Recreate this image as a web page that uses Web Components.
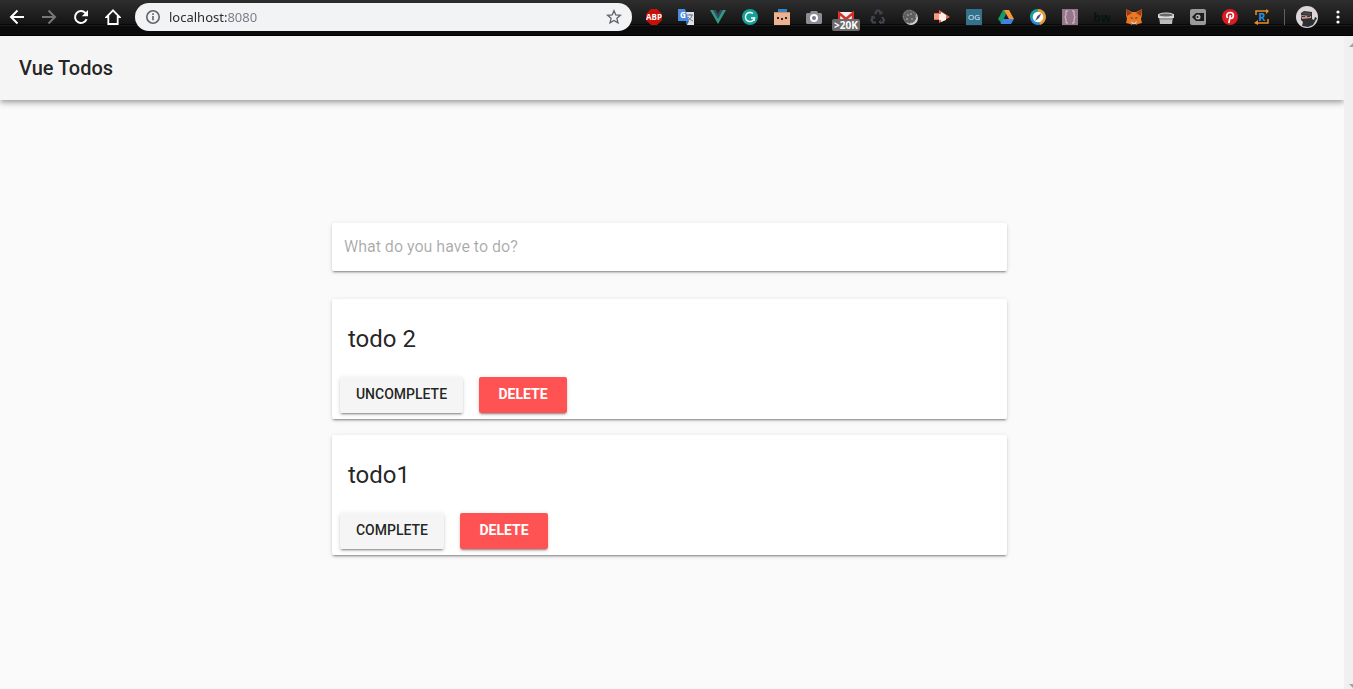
<!DOCTYPE html>
<html lang="en">
<head>
<meta charset="utf-8">
<meta name="viewport" content="width=device-width, initial-scale=1">
<title>Vue Todos</title>
<style>
  html, body { height: 100%; margin: 0; }
  body { background: #fafafa; color: rgba(0,0,0,.87); font-family: Roboto, "Liberation Sans", sans-serif; overflow: hidden; }
</style>
</head>
<body>
<todo-window></todo-window>

<script>
const define = (name, html, setup) => customElements.define(name, class extends HTMLElement {
  connectedCallback() {
    if (this.shadowRoot) return;
    const template = document.createElement('template');
    template.innerHTML = html;
    this.attachShadow({ mode: 'open' }).append(template.content.cloneNode(true));
    if (setup) setup(this, this.shadowRoot);
  }
});

/* A toolbar button that holds one drawn icon */
define('icon-button', `
  <style>
    :host { display: block; position: relative; flex: none; width: 32px; height: 34px; }
    button { display: flex; align-items: center; justify-content: center; width: 100%; height: 100%; padding: 0; border: 0; background: none; color: inherit; }
    ::slotted(svg) { display: block; }
  </style>
  <button type="button"><slot></slot></button>
  <slot name="badge"></slot>`,
  (host, root) => root.querySelector('button').setAttribute('aria-label', host.getAttribute('label')));

define('address-bar', `
  <style>
    :host { display: flex; align-items: center; flex: 1; min-width: 120px; height: 28px; margin: 0 6px; padding: 0 10px; box-sizing: border-box; border-radius: 14px; background: #f1f3f4; color: #5f6368; }
    svg { flex: none; }
    input { flex: 1; min-width: 0; height: 24px; margin: 0; padding: 0 8px; border: 0; outline: 0; font: 13px/24px "Noto Sans", sans-serif;
      background: linear-gradient(90deg, #26282b 66px, #777b80 66px); -webkit-background-clip: text; background-clip: text; color: transparent; }
  </style>
  <svg width="16" height="16" viewBox="0 0 16 16" fill="none" stroke="currentColor" stroke-width="1.6"><circle cx="8" cy="8" r="6.2"/><path d="M8 7v4.3M8 4.3v1.6"/></svg>
  <input type="text" aria-label="Address" value="localhost:8080" spellcheck="false">
  <svg width="16" height="16" viewBox="0 0 16 16" fill="none" stroke="currentColor" stroke-width="1.3"><path d="M8 1.7l1.8 4.2 4.6.4-3.5 3 1.1 4.5L8 11.4l-4 2.4 1.100-4.500-3.500-3 4.600-.4z"/></svg>`);

define('browser-bar', `
  <style>
    :host { display: flex; align-items: flex-start; height: 36px; padding: 0 0 0 1px; box-sizing: border-box; color: #fff;
      background: linear-gradient(#2e2e2e, #151515 24px, #080808 24px, #080808 25px, #1a1a1a 25px, #1a1a1a 26px, #0b0b0b 26px, #0b0b0b 35px, #000 35px); }
    nav, .extensions { display: flex; flex: none; }
    address-bar { margin-top: 3px; }
    .off { color: #777; }
    .rule { width: 1px; height: 16px; margin: 9px 6px 0; background: #606060; }
    .profile { width: 32px; }
    .menu { width: 30px; }
    .badge { position: absolute; left: 2px; top: 19px; width: 28px; height: 12px; border-radius: 2px; background: #6b6b6b; color: #fff; font: bold 10px/12px "Open Sans", sans-serif; text-align: center; }
    text { font-family: "Open Sans", sans-serif; font-weight: 700; text-anchor: middle; }
  </style>
  <nav aria-label="Browser navigation">
    <icon-button label="Back"><svg width="16" height="16" viewBox="0 0 16 16" fill="none" stroke="currentColor" stroke-width="2"><path d="M15 8H2.500M8.500 1.500L2 8l6.500 6.500"/></svg></icon-button>
    <icon-button label="Forward" class="off"><svg width="16" height="16" viewBox="0 0 16 16" fill="none" stroke="currentColor" stroke-width="2"><path d="M1 8h12.500M7.500 1.500L14 8l-6.500 6.500"/></svg></icon-button>
    <icon-button label="Reload"><svg width="16" height="16" viewBox="0 0 16 16" fill="none" stroke="currentColor" stroke-width="2"><path d="M13.600 10.200A6 6 0 1 1 12.400 3.900L14 5.500"/><path d="M15 1v6.200H8.800z" fill="currentColor" stroke="none"/></svg></icon-button>
    <icon-button label="Home"><svg width="16" height="16" viewBox="0 0 16 16" fill="none" stroke="currentColor" stroke-width="1.800"><path d="M8 1.300L1.500 8H3.300v7h9.400V8h1.800z"/></svg></icon-button>
  </nav>
  <address-bar></address-bar>
  <div class="extensions">
    <icon-button label="Adblock Plus"><svg width="16" height="16" viewBox="0 0 16 16"><path d="M5 0h6l5 5v6l-5 5H5l-5-5V5z" fill="#c81208"/><text x="8" y="11" font-size="8" fill="#fff">ABP</text></svg></icon-button>
    <icon-button label="Translate"><svg width="16" height="16" viewBox="0 0 16 16"><path d="M6 3h10v13H9z" fill="#dfe1e4"/><path d="M9 6h6M12 5v1M14 6c-.5 3-2 4-4 5M10 8c1 2 3 3 5 4" stroke="#66788a" fill="none"/><path d="M0 0h7l4 12H0z" fill="#4a8be0"/><path d="M8 12h3l-2 4z" fill="#2864bd"/><text x="5" y="9" font-size="8" fill="#fff">G</text></svg></icon-button>
    <icon-button label="Vue devtools"><svg width="16" height="16" viewBox="0 0 16 16"><path d="M0 1h4l4 7 4-7h4L8 15z" fill="#2d9c83"/><path d="M3 1h3l2 4 2-4h3L8 10z" fill="#34495e"/></svg></icon-button>
    <icon-button label="Grammarly"><svg width="16" height="16" viewBox="0 0 16 16"><circle cx="8" cy="8" r="8" fill="#15a196"/><path d="M11 4.500A4.600 4.600 0 1 0 12.500 9H9" stroke="#fff" stroke-width="1.500" fill="none"/><path d="M12.500 8.500v3.300" stroke="#fff"/></svg></icon-button>
    <icon-button label="Character"><svg width="16" height="16" viewBox="0 0 16 16"><path d="M0 4h16v12H0z" fill="#edb391"/><path d="M4 0h9v3H4z" fill="#3386c6"/><path d="M0 3h16v1H0z" fill="#cb8f71"/><path d="M3 8h2v2H3zM11 8h2v2h-2zM7 9h2v2H7z" fill="#27272d"/></svg></icon-button>
    <icon-button label="Screenshot"><svg width="16" height="16" viewBox="0 0 16 16"><path d="M5 2h6l1 2h3l1 1v9l-1 1H1l-1-1V5l1-1h3z" fill="#8b8c94"/><circle cx="8" cy="9" r="3" fill="#777984" stroke="#fff" stroke-width="2"/></svg></icon-button>
    <icon-button label="Mail checker"><svg width="16" height="16" viewBox="0 0 16 16"><path d="M0 3h16v10H0z" fill="#f1f1f1"/><path d="M1 13V4l7 6 7-6v9" fill="none" stroke="#dc2e28" stroke-width="2.500"/></svg><span slot="badge" class="badge">&gt;20K</span></icon-button>
    <icon-button label="Recycle"><svg width="16" height="16" viewBox="0 0 16 16" fill="none" stroke="#414750" stroke-width="2.200"><path d="M5 5l2-3.500h2l2 3M12 8l2 3-1 2.500h-3M6 13.500H3L1.500 11 3 8"/><path d="M9 5h3V2M11 11l-2 2 2 2M1 8l3-1 1 3" stroke-width="1"/></svg></icon-button>
    <icon-button label="Cookies"><svg width="16" height="16" viewBox="0 0 16 16"><circle cx="9" cy="9" r="7" fill="#d3d3d3"/><circle cx="7.500" cy="7.500" r="7" fill="#5e5e5e"/><circle cx="7.500" cy="7.500" r="6" fill="none" stroke="#8f8f8f" stroke-dasharray="1.500 2"/><path d="M5 5h2v2H5zM8 4h2v2H8zM4 9h2v2H4zM9 9h2v2H9z" fill="#8a8a8a"/></svg></icon-button>
    <icon-button label="Run"><svg width="16" height="16" viewBox="0 0 16 16"><path d="M0 4h5V1l11 7-11 6v-3H0z" fill="#ed6653"/><path d="M5 5h2V3l5 3v5l-5 2v-2H5z" fill="#fff0e9"/><path d="M0 5h5v5H0z" fill="#f49b86"/></svg></icon-button>
    <icon-button label="Open Graph"><svg width="16" height="16" viewBox="0 0 16 16"><path d="M0 0h16v16H0z" fill="#33718d"/><text x="8" y="11" font-size="8" style="font-weight:400" fill="#e3edf1">OG</text></svg></icon-button>
    <icon-button label="Drive"><svg width="16" height="16" viewBox="0 0 16 16"><path d="M5 1h5L3.500 14.500 0 10z" fill="#159a65"/><path d="M6 1h5l5 9h-5z" fill="#fa9734"/><path d="M5 10h11l-3 5H2.500z" fill="#3f82e6"/></svg></icon-button>
    <icon-button label="Compass"><svg width="16" height="16" viewBox="0 0 16 16"><circle cx="8" cy="8" r="8" fill="#258dd8"/><path d="M8 0A8 8 0 0 0 0 9l8-1z" fill="#15a191"/><path d="M8 0a8 8 0 0 1 2 15.700L8 8z" fill="#f49425"/><circle cx="8" cy="8" r="5.300" fill="#fff"/><path d="M11.500 4L9 9l-4 3 2.500-5z" fill="#44515c"/></svg></icon-button>
    <icon-button label="Braces"><svg width="16" height="16" viewBox="0 0 16 16"><path d="M0 0h16v16H0z" fill="#95768b"/><path d="M6 2H4v4L3 8l1 2v4h2M10 2h2v4l1 2-1 2v4h-2" stroke="#e0c9d7" stroke-width="1" fill="none"/></svg></icon-button>
    <icon-button label="Builtwith"><svg width="16" height="16" viewBox="0 0 16 16"><text x="8" y="13" font-size="12" fill="#07150b">bw</text></svg></icon-button>
    <icon-button label="Wallet"><svg width="16" height="16" viewBox="0 0 16 16"><path d="M0 0l6 3h4l6-3v6l-1 4 1 4-4 1-2 1H6l-2-1-4-1 1-4-1-4z" fill="#e97724"/><path d="M0 0l6 4-5 3zM16 0l-6 4 5 3z" fill="#9c3d18"/><path d="M4 8l3 1-1 1zM12 8L9 9l1 1zM6 14h4v2H6z" fill="#333944"/><path d="M5 12l3 2 3-2-1 3H6z" fill="#d8c8ba"/></svg></icon-button>
    <icon-button label="Storage"><svg width="16" height="16" viewBox="0 0 16 16"><path d="M1 7h14l-1 8H2z" fill="#bcbcbc"/><path d="M0 5h16v4H0z" fill="#d9d9d9"/><ellipse cx="8" cy="6" rx="7.500" ry="2" fill="#686868" stroke="#ddd"/><path d="M2 10h12" stroke="#777"/></svg></icon-button>
    <icon-button label="Capture"><svg width="16" height="16" viewBox="0 0 16 16"><rect width="16" height="16" rx="2" fill="#9a9a9a"/><path d="M2 8l4-4h8v8H6z" fill="#1c1c1c"/><circle cx="8" cy="8" r="2.500" fill="#b7b7b7"/><circle cx="7.500" cy="8" r="1" fill="#222"/></svg></icon-button>
    <icon-button label="Pinterest"><svg width="16" height="16" viewBox="0 0 16 16"><circle cx="8" cy="8" r="8" fill="#d91b22"/><path d="M5.500 9C3.500 6 5.500 3.500 8.300 3.500c4 0 4 5.500.7 6-1 0-1.500-.5-1.600-1M8.500 6L6.800 14" fill="none" stroke="#fff" stroke-width="1.700"/></svg></icon-button>
    <icon-button label="Redirect"><svg width="16" height="16" viewBox="0 0 16 16"><path d="M2 6V2h12M14 10v4H2" stroke="#ed8c27" stroke-width="1.500" fill="none"/><path d="M12 0l3 2-3 3zM4 11l-4 3 4 2z" fill="#ed8c27"/><text x="8" y="12" font-size="11" fill="#2d8eda">R</text></svg></icon-button>
  </div>
  <div class="rule"></div>
  <icon-button label="Profile" class="profile"><svg width="22" height="22" viewBox="0 0 22 22"><circle cx="11" cy="11" r="11" fill="#dcd5d9"/><path d="M5 7l3-2 8 1v7l2 1 1-3 2 1-4 7-5 2-6-1 1-4-2-2z" fill="#2d2f32"/><path d="M5 9l10 1v2l-9 1z" fill="#c99388"/><path d="M6 10h3v1H6zM11 10h3v1h-3z" fill="#383838"/><path d="M8 6l7 1v2l-9-1z" fill="#46484b"/></svg></icon-button>
  <icon-button label="Menu" class="menu"><svg width="4" height="14" viewBox="0 0 4 14" fill="#fff"><circle cx="2" cy="2" r="1.600"/><circle cx="2" cy="7" r="1.600"/><circle cx="2" cy="12" r="1.600"/></svg></icon-button>`);

define('app-toolbar', `
  <style>
    :host { display: flex; align-items: center; height: 64px; padding: 0 19px; box-sizing: border-box; background: #f5f5f5; box-shadow: 0 2px 4px -1px rgba(0,0,0,.2), 0 4px 5px rgba(0,0,0,.14), 0 1px 10px rgba(0,0,0,.12); }
    h1 { margin: 0; font-size: 20px; font-weight: 500; line-height: 32px; }
  </style>
  <h1><slot></slot></h1>`);

define('todo-field', `
  <style>
    :host { display: block; border-radius: 2px; background: #fff; box-shadow: 0 3px 1px -2px rgba(0,0,0,.2), 0 2px 2px rgba(0,0,0,.14), 0 1px 5px rgba(0,0,0,.12); }
    input { display: block; width: 100%; height: 48px; margin: 0; padding: 0 12px 2px; box-sizing: border-box; border: 0; outline: 0; background: none; color: rgba(0,0,0,.87); font: 400 16px/20px Roboto, sans-serif; }
    input::placeholder { color: rgba(0,0,0,.34); opacity: 1; }
  </style>
  <input type="text" aria-label="New todo" placeholder="What do you have to do?">`);

define('app-button', `
  <style>
    :host { display: block; }
    button { display: block; min-width: 88px; height: 36px; margin: 0; padding: 0 16px 2px; border: 0; border-radius: 2px; background: #f5f5f5; color: rgba(0,0,0,.87); font: 500 14px/34px Roboto, sans-serif; text-transform: uppercase; cursor: pointer;
      box-shadow: 0 3px 1px -2px rgba(0,0,0,.2), 0 2px 2px rgba(0,0,0,.14), 0 1px 5px rgba(0,0,0,.12); }
    :host([danger]) button { background: #ff5252; color: #fff; font-weight: 700; }
  </style>
  <button type="button"><slot></slot></button>`);

define('todo-card', `
  <style>
    :host { display: block; padding: 20px 8px 6px; border-radius: 2px; background: #fff; box-shadow: 0 3px 1px -2px rgba(0,0,0,.2), 0 2px 2px rgba(0,0,0,.14), 0 1px 5px rgba(0,0,0,.12); }
    h2 { margin: 0 8px 18px; font-size: 24px; font-weight: 400; line-height: 40px; }
    div { display: flex; gap: 16px; }
  </style>
  <h2><slot name="title"></slot></h2>
  <div><slot></slot></div>`);

define('page-scroller', `
  <style>
    :host { display: flex; flex-direction: column; justify-content: space-between; align-items: flex-end; width: 9px; padding: 7px 0 1px; box-sizing: border-box; background: #f0f0f0; overflow: hidden; }
    svg { display: block; flex: none; }
  </style>
  <svg width="4" height="4" viewBox="0 0 4 4" fill="#a3a3a3"><path d="M0 4l4-4v4z"/></svg>
  <svg width="4" height="4" viewBox="0 0 4 4" fill="#a3a3a3"><path d="M0 0h4v4z"/></svg>`);

define('todo-window', `
  <style>
    :host { display: grid; grid-template-rows: auto 1fr; height: 100vh; }
    .view { display: grid; grid-template-columns: 1fr auto; min-height: 0; }
    .page { overflow: hidden; }
    main { margin: 123px 25.1% 0 24.7%; }
    section { display: grid; gap: 16px; margin-top: 28px; }
  </style>
  <browser-bar></browser-bar>
  <div class="view">
    <div class="page">
      <app-toolbar>Vue Todos</app-toolbar>
      <main>
        <todo-field></todo-field>
        <section aria-label="Todos">
          <todo-card><span slot="title">todo 2</span><app-button>Uncomplete</app-button><app-button danger>Delete</app-button></todo-card>
          <todo-card><span slot="title">todo1</span><app-button>Complete</app-button><app-button danger>Delete</app-button></todo-card>
        </section>
      </main>
    </div>
    <page-scroller></page-scroller>
  </div>`);
</script>
</body>
</html>
